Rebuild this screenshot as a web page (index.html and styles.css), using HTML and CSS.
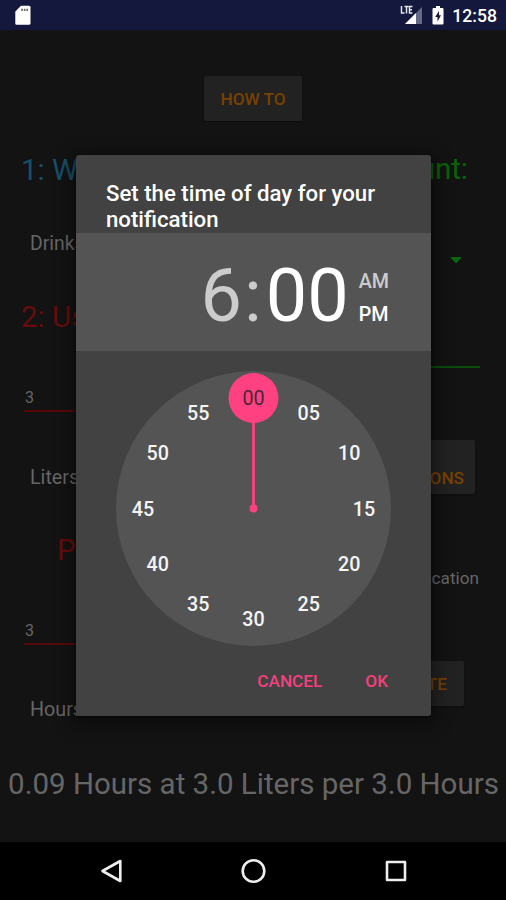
FILE: index.html
```html
<!DOCTYPE html>
<html lang="en">
<head>
<meta charset="utf-8">
<title>Notification time</title>
<link rel="stylesheet" href="styles.css">
</head>
<body>
<div class="screen">
  <header class="status">
    <svg class="sd" width="18" height="22" viewBox="0 0 18 22"><path d="M7 .8H15Q16.500 .8 16.500 2.300V18.300Q16.500 19.800 15 19.800H2.800Q1.300 19.800 1.300 18.300V6.500Z" fill="#fff"/><path d="M7.200 3.800H8.800V6H7.200ZM9.800 3.800H11.400V6H9.800ZM12.400 3.800H14V6H12.400Z" fill="#666"/></svg>
    <svg class="signal" width="24" height="22" viewBox="0 0 24 22"><path d="M22 2V19H5Z" fill="#666985"/><path d="M16 8V19H5Z" fill="#fff"/><path d="M1.500 1V8H4.500M4.500 1.500H8.500M6.500 1.500V8.500M12.500 1.500H9.500V8H12.500M9.500 4.800H12" fill="none" stroke="#e4e4ea" stroke-width="1.500"/></svg>
    <svg class="battery" width="12" height="20" viewBox="0 0 12 20"><path d="M4 0H8V2H10.500Q11.500 2 11.500 3V17.500Q11.500 18.500 10.500 18.500H1.500Q.5 18.500 .5 17.500V3Q.5 2 1.500 2H4Z" fill="#fff"/><path d="M7 5L3.200 11H5.500V15.500L9 9.300H7Z" fill="#14183d"/></svg>
    <span class="time">12:58</span>
  </header>
  <main class="app">
    <div class="top"><span class="btn howto">HOW TO</span></div>
    <div class="form">
      <div class="left">
        <div class="heading blue">1: We</div>
        <div class="label spaced">Drinks</div>
        <div class="heading red">2: Us</div>
        <div class="field">3</div>
        <div class="label">Liters</div>
        <div class="heading red indent">P</div>
        <div class="field">3</div>
        <div class="label">Hours</div>
      </div>
      <div class="right">
        <div class="heading green">unt:</div>
        <div class="spinner"><svg width="12" height="7" viewBox="0 0 12 7"><path d="M0 0H12L6 6.500Z" fill="#096809"/></svg></div>
        <div class="rule"></div>
        <div class="btn options">ONS</div>
        <div class="note">cation</div>
        <div class="btn calculate">TE</div>
      </div>
    </div>
    <div class="result">0.09 Hours at 3.0 Liters per 3.0 Hours</div>
  </main>
  <footer class="nav">
    <svg width="506" height="58" viewBox="0 0 506 58" fill="none" stroke="#eee" stroke-width="2.600" stroke-linejoin="round"><path d="M120.300 19V39L102.500 29Z"/><circle cx="253.500" cy="29" r="10.800"/><rect x="387" y="20" width="18" height="18"/></svg>
  </footer>
  <section class="dialog">
    <h1>Set the time of day for your notification</h1>
    <div class="picked">
      <div class="digits"><span class="dim">6</span><span class="dim colon">:</span><span>00</span></div>
      <div class="ampm"><span class="dim">AM</span><span>PM</span></div>
    </div>
    <svg class="clock" width="276" height="276" viewBox="-137.500 -137.500 276 276">
      <circle r="137.500" fill="#545454"/>
      <path d="M0 0V-100" stroke="#ff4081" stroke-width="2.800"/>
      <circle r="4" fill="#ff4081"/>
      <circle cy="-110.500" r="25" fill="#ff4081"/>
      <g class="numbers">
        <text class="selected" x="0" y="-103.500">00</text>
        <text x="55.300" y="-88.700">05</text>
        <text x="95.700" y="-48.300">10</text>
        <text x="110.500" y="7">15</text>
        <text x="95.700" y="62.300">20</text>
        <text x="55.300" y="102.700">25</text>
        <text x="0" y="117.500">30</text>
        <text x="-55.300" y="102.700">35</text>
        <text x="-95.700" y="62.300">40</text>
        <text x="-110.500" y="7">45</text>
        <text x="-95.700" y="-48.300">50</text>
        <text x="-55.300" y="-88.700">55</text>
      </g>
    </svg>
    <div class="actions"><span>CANCEL</span><span>OK</span></div>
  </section>
</div>
</body>
</html>
```

FILE: styles.css
```css
* { box-sizing: border-box; }
body { margin: 0; font-family: Roboto, "Liberation Sans", sans-serif; background: #131313; }
.screen { position: relative; width: 506px; height: 900px; overflow: hidden; display: flex; flex-direction: column; }
svg { display: block; flex: none; }

.status { height: 30px; flex: none; background: #14183d; display: flex; align-items: flex-start; padding: 5px 9px 0 14px; color: #fff; }
.signal { margin: 0 8px 0 auto; }
.battery { margin: 1px 8px 0 0; }
.time { font-size: 17.6px; font-weight: 500; line-height: 22px; }

.app { height: 812px; flex: none; }
.top { height: 120px; padding-top: 46px; display: flex; justify-content: center; align-items: flex-start; }
.btn { background: #222; color: #794100; font-size: 17.2px; font-weight: 500; border-radius: 2px; box-shadow: 0 1px 2px #0c0c0c; display: flex; align-items: center; justify-content: flex-end; white-space: nowrap; }
.howto { width: 98px; height: 45px; justify-content: center; }

.form { height: 623px; display: flex; justify-content: space-between; }
.left { width: 130px; display: grid; grid-template-rows: 39px 109px 38px 76px 130px 16px 87px 128px; align-items: center; }
.heading { font-size: 29.5px; line-height: 38px; padding-left: 21px; white-space: nowrap; }
.blue { color: #175068; }
.red { color: #650d0d; }
.green { color: #076407; height: 39px; line-height: 39px; padding: 0 38px 0 0; }
.indent { padding-left: 57px; line-height: 16px; }
.label { font-size: 19.7px; color: #666; padding-left: 30px; }
.spaced { font-size: 19.4px; }
.field { align-self: end; margin-left: 24px; padding-left: 1px; font-size: 16px; line-height: 24px; color: #666; border-bottom: 2px solid #570909; }

.right { width: 106px; display: flex; flex-direction: column; align-items: flex-end; }
.spinner { height: 177px; padding: 68px 44px 0 0; }
.rule { width: 100px; height: 2px; margin-right: 26px; background: #0a4c0a; }
.options { width: 74px; height: 54px; margin: 72px 31px 0 0; padding: 22px 11px 0 0; }
.note { font-size: 17.2px; line-height: 24px; color: #666; margin: 72px 27px 0 0; }
.calculate { width: 63px; height: 45px; margin: 71px 42px 0 0; padding: 1px 17px 0 0; }
.result { font-size: 29.5px; line-height: 21px; color: #666; text-align: center; white-space: nowrap; padding: 1px 0 0 1px; }
.nav { height: 58px; flex: none; background: #000; }

/* The modal floats above the dimmed form. */
.dialog { position: absolute; left: 76px; top: 155px; width: 355px; height: 561px; background: #424242; border-radius: 3px; box-shadow: 0 4px 18px 5px rgba(0, 0, 0, .4), 0 1px 3px rgba(0, 0, 0, .5); color: #fff; display: flex; flex-direction: column; overflow: hidden; }
.dialog h1 { margin: 0; height: 78px; flex: none; padding: 25px 30px 0; font-size: 22.2px; line-height: 26px; font-weight: 500; }
.picked { height: 118px; flex: none; background: #545454; display: flex; justify-content: flex-end; align-items: center; padding: 7px 42px 0 0; }
.digits { font-size: 73.8px; line-height: 96px; white-space: nowrap; }
.colon { margin: 0 4px 0 2px; }
.dim { color: #ccc; }
.ampm { display: flex; flex-direction: column; margin-left: 10px; padding-top: 4px; font-size: 19.7px; line-height: 33px; font-weight: 500; }
.clock { margin: 20px 0 0 40px; }
.numbers { font-size: 19.7px; font-weight: 500; fill: #f4f4f4; text-anchor: middle; }
.selected { fill: #4a2734; font-weight: 400; }
.actions { display: flex; justify-content: flex-end; gap: 43px; margin-top: 23px; padding-right: 43px; font-size: 17.2px; line-height: 22px; font-weight: 500; color: #f3407d; }
```
